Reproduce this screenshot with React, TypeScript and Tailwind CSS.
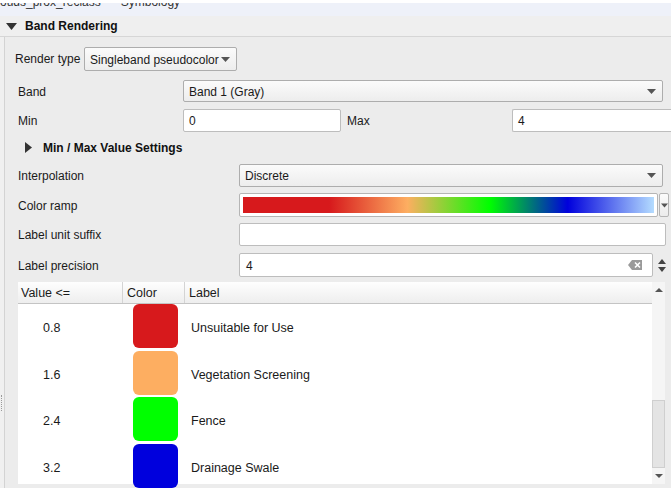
import React from 'react';

const font = { fontFamily: '"Liberation Sans", Arial, sans-serif' };

const Arrow = ({ className = '' }: { className?: string }) => (
  <svg width="9" height="5" viewBox="0 0 9 5" className={className}>
    <path d="M0 0h9L4.5 5z" fill="#555" />
  </svg>
);

const Combo = ({ text, className = '' }: { text: string; className?: string }) => (
  <div
    className={`flex items-center justify-between rounded-[2px] border border-[#adadad] bg-gradient-to-b from-[#fbfbfb] to-[#ededed] pl-[5px] pr-[6px] text-[12px] text-[#1a1a1a] ${className}`}
  >
    <span className="pt-[1px]">{text}</span>
    <Arrow />
  </div>
);

const Input = ({ text = '', className = '' }: { text?: string; className?: string }) => (
  <div
    className={`flex items-center rounded-[2px] border border-[#bdbdbd] bg-white pl-[5px] pt-[1px] text-[12px] text-[#1a1a1a] ${className}`}
  >
    {text}
  </div>
);

const rows = [
  { v: '0.8', c: '#d7191c', l: 'Unsuitable for Use' },
  { v: '1.6', c: '#fdae61', l: 'Vegetation Screening' },
  { v: '2.4', c: '#00ff00', l: 'Fence' },
  { v: '3.2', c: '#0000dd', l: 'Drainage Swale' },
];

export default function App() {
  return (
    <div className="h-[488px] w-[671px] overflow-hidden bg-[#f0f0f0]" style={font}>
      {/* tab strip, cut off at top */}
      <div className="h-[16px] overflow-hidden border-t-[3px] border-white bg-[#eef1f9] text-[12px] text-[#333]">
        <div className="-mt-[8px] flex gap-[20px] leading-[14px]">
          <span>ouds_prox_reclass</span>
          <span>Symbology</span>
        </div>
      </div>

      {/* section header */}
      <div className="flex h-[21px] items-center border-b border-[#d6d6d6] bg-[#efefef]">
        <svg width="11" height="7" viewBox="0 0 11 7" className="ml-[6px] mr-[8px] mt-[1px]">
          <path d="M0 0h11L5.5 7z" fill="#333" />
        </svg>
        <span className="text-[12px] font-bold text-[#111]">Band Rendering</span>
      </div>

      <div className="flex">
        {/* left splitter strip */}
        <div className="relative h-[451px] w-[4px] bg-[#f0f0f0]">
          <div className="absolute left-[1px] top-[358px] h-[16px] w-[1px] border-l border-dotted border-[#9a9a9a]" />
        </div>

        <div className="h-[451px] flex-1 border-l border-[#d3d3d3] bg-[#ececec] text-[12px] text-[#1a1a1a]">
          {/* render type */}
          <div className="mt-[10px] flex h-[24px] items-center">
            <span className="ml-[10px] w-[69px]">Render type</span>
            <Combo text="Singleband pseudocolor" className="h-[24px] w-[153px]" />
          </div>

          {/* band */}
          <div className="mt-[9px] flex h-[22px] items-center">
            <span className="ml-[13px] w-[165px] pt-[1px]">Band</span>
            <Combo text="Band 1 (Gray)" className="h-[22px] w-[480px]" />
          </div>

          {/* min / max */}
          <div className="mt-[7px] flex h-[23px] items-center">
            <span className="ml-[13px] w-[165px] pt-[1px]">Min</span>
            <Input text="0" className="h-[23px] w-[158px]" />
            <span className="ml-[6px] w-[165px] pt-[1px]">Max</span>
            <Input text="4" className="h-[23px] flex-1 rounded-r-none border-r-0" />
          </div>

          {/* min/max settings */}
          <div className="mt-[7px] flex h-[16px] items-center pt-[1px]">
            <svg width="7" height="11" viewBox="0 0 7 11" className="ml-[20px] mr-[11px]">
              <path d="M0 0v11L7 5.5z" fill="#333" />
            </svg>
            <span className="font-bold text-[#111]">Min / Max Value Settings</span>
          </div>

          {/* interpolation */}
          <div className="mt-[9px] flex h-[23px] items-center">
            <span className="ml-[13px] w-[221px] pt-[1px]">Interpolation</span>
            <Combo text="Discrete" className="h-[23px] w-[424px]" />
          </div>

          {/* color ramp */}
          <div className="mt-[6px] flex h-[24px] items-center">
            <span className="ml-[13px] w-[221px] pt-[1px]">Color ramp</span>
            <div className="flex h-[24px] w-[419px] items-center rounded-[2px] border border-[#b5b5b5] bg-white p-[3px]">
              <div className="h-full w-full bg-[linear-gradient(to_right,#d7191c_0%,#d7191c_21%,#fdae61_40%,#00ff00_60%,#0000dd_79%,#b4dcff_100%)]" />
            </div>
            <div className="ml-[1px] flex h-[24px] w-[10px] items-center justify-center rounded-[2px] border border-[#b5b5b5] bg-gradient-to-b from-[#fbfbfb] to-[#ececec]">
              <Arrow className="w-[7px]" />
            </div>
          </div>

          {/* label unit suffix */}
          <div className="mt-[6px] flex h-[23px] items-center">
            <span className="ml-[13px] w-[221px] pt-[1px]">Label unit suffix</span>
            <Input className="h-[23px] w-[427px]" />
          </div>

          {/* label precision */}
          <div className="mt-[7px] flex h-[24px] items-center">
            <span className="ml-[13px] w-[221px] pt-[1px]">Label precision</span>
            <div className="flex h-[24px] w-[414px] items-center justify-between rounded-[2px] border border-[#bdbdbd] bg-white pl-[6px] pr-[10px]">
              <span className="pt-[1px]">4</span>
              <svg width="14" height="10" viewBox="0 0 14 10">
                <path d="M4 0h10v10H4L0 5z" fill="#9a9a9a" />
                <path d="M7 2.5l5 5M12 2.5l-5 5" stroke="#fff" strokeWidth="1.6" />
              </svg>
            </div>
            <div className="ml-[3px] flex h-[24px] w-[12px] flex-col items-center justify-center gap-[3px]">
              <svg width="8" height="5" viewBox="0 0 8 5"><path d="M0 5h8L4 0z" fill="#444" /></svg>
              <svg width="8" height="5" viewBox="0 0 8 5"><path d="M0 0h8L4 5z" fill="#444" /></svg>
            </div>
          </div>

          {/* table */}
          <div className="ml-[13px] mt-[5px] flex h-[202px] w-[647px] bg-white">
            <div className="flex flex-1 flex-col">
              <div className="flex h-[22px] shrink-0 border-b border-[#c4c4c4] bg-gradient-to-b from-[#fefefe] to-[#eeeeee] text-[12.5px] text-[#1a1a1a]">
                <div className="flex w-[105px] items-center border-r border-[#d4d4d4] pl-[3px] pt-[2px]">Value &lt;=</div>
                <div className="flex w-[62px] items-center border-r border-[#d4d4d4] pl-[4px] pt-[2px]">Color</div>
                <div className="flex flex-1 items-center pl-[4px] pt-[2px]">Label</div>
              </div>
              <div className="text-[12.5px] text-[#1a1a1a]">
                {rows.map((r) => (
                  <div key={r.v} className="flex h-[46.7px] items-start">
                    <div className="w-[115px] pl-[25px] pt-[15px]">{r.v}</div>
                    <div className="h-[44px] w-[45px] rounded-[6px]" style={{ backgroundColor: r.c }} />
                    <div className="pl-[13px] pt-[15px]">{r.l}</div>
                  </div>
                ))}
              </div>
            </div>
            {/* scrollbar */}
            <div className="flex w-[13px] flex-col items-center bg-[#f5f5f5]">
              <div className="flex h-[16px] w-full items-center justify-center">
                <svg width="8" height="4" viewBox="0 0 8 4"><path d="M0 4h8L4 0z" fill="#555" /></svg>
              </div>
              <div className="flex-1" />
              <div className="h-[68px] w-full border border-[#cfcfcf] bg-[#e4e4e4]" />
              <div className="flex h-[16px] w-full items-center justify-center">
                <svg width="8" height="4" viewBox="0 0 8 4"><path d="M0 0h8L4 4z" fill="#555" /></svg>
              </div>
            </div>
          </div>
        </div>
      </div>
    </div>
  );
}
